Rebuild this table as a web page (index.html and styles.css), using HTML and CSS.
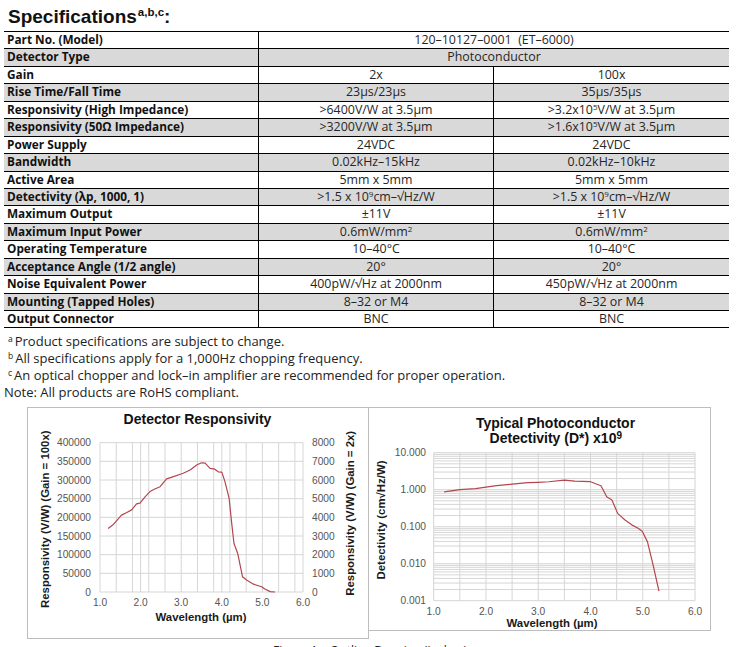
FILE: index.html
```html
<!DOCTYPE html>
<html lang="en">
<head>
<meta charset="utf-8">
<title>Specifications</title>
<link rel="stylesheet" href="styles.css">
</head>
<body>
<div class="page">
  <h1 class="title">Specifications<sup>a,b,c</sup>:</h1>

  <div class="spec">
    <div class="row"><div class="lab">Part No. (Model)</div><div class="val span">120–10127–0001&nbsp; (ET–6000)</div></div>
    <div class="row alt"><div class="lab">Detector Type</div><div class="val span">Photoconductor</div></div>
    <div class="row"><div class="lab">Gain</div><div class="val first">2x</div><div class="val">100x</div></div>
    <div class="row alt"><div class="lab">Rise Time/Fall Time</div><div class="val first">23µs/23µs</div><div class="val">35µs/35µs</div></div>
    <div class="row"><div class="lab">Responsivity (High Impedance)</div><div class="val first">&gt;6400V/W at 3.5µm</div><div class="val">&gt;3.2x10<sup>5</sup>V/W at 3.5µm</div></div>
    <div class="row alt"><div class="lab">Responsivity (50Ω Impedance)</div><div class="val first">&gt;3200V/W at 3.5µm</div><div class="val">&gt;1.6x10<sup>5</sup>V/W at 3.5µm</div></div>
    <div class="row"><div class="lab">Power Supply</div><div class="val first">24VDC</div><div class="val">24VDC</div></div>
    <div class="row alt"><div class="lab">Bandwidth</div><div class="val first">0.02kHz–15kHz</div><div class="val">0.02kHz–10kHz</div></div>
    <div class="row"><div class="lab">Active Area</div><div class="val first">5mm x 5mm</div><div class="val">5mm x 5mm</div></div>
    <div class="row alt"><div class="lab">Detectivity (λp, 1000, 1)</div><div class="val first">&gt;1.5 x 10<sup>9</sup>cm–√Hz/W</div><div class="val">&gt;1.5 x 10<sup>9</sup>cm–√Hz/W</div></div>
    <div class="row"><div class="lab">Maximum Output</div><div class="val first">±11V</div><div class="val">±11V</div></div>
    <div class="row alt"><div class="lab">Maximum Input Power</div><div class="val first">0.6mW/mm<sup>2</sup></div><div class="val">0.6mW/mm<sup>2</sup></div></div>
    <div class="row"><div class="lab">Operating Temperature</div><div class="val first">10–40°C</div><div class="val">10–40°C</div></div>
    <div class="row alt"><div class="lab">Acceptance Angle (1/2 angle)</div><div class="val first">20°</div><div class="val">20°</div></div>
    <div class="row"><div class="lab">Noise Equivalent Power</div><div class="val first">400pW/√Hz at 2000nm</div><div class="val">450pW/√Hz at 2000nm</div></div>
    <div class="row alt"><div class="lab">Mounting (Tapped Holes)</div><div class="val first">8–32 or M4</div><div class="val">8–32 or M4</div></div>
    <div class="row"><div class="lab">Output Connector</div><div class="val first">BNC</div><div class="val">BNC</div></div>
  </div>

  <div class="notes">
    <p class="note"><sup>a</sup>Product specifications are subject to change.</p>
    <p class="note"><sup>b</sup>All specifications apply for a 1,000Hz chopping frequency.</p>
    <p class="note"><sup>c</sup>An optical chopper and lock–in amplifier are recommended for proper operation.</p>
    <p class="note plain">Note: All products are RoHS compliant.</p>
  </div>

  <div class="charts">
    <div class="chart chart-l">
      <svg width="340" height="230" viewBox="0 0 340 230">
        <text class="ctitle" x="169.5" y="16">Detector Responsivity</text>
        <g transform="translate(72,184) scale(40.6,-0.37333)" class="grid">
          <line x1="0" x2="5" y1="0" y2="0"/><line x1="0" x2="5" y1="50" y2="50"/><line x1="0" x2="5" y1="100" y2="100"/>
          <line x1="0" x2="5" y1="150" y2="150"/><line x1="0" x2="5" y1="200" y2="200"/><line x1="0" x2="5" y1="250" y2="250"/>
          <line x1="0" x2="5" y1="300" y2="300"/><line x1="0" x2="5" y1="350" y2="350"/><line x1="0" x2="5" y1="400" y2="400"/>
          <line x1="0" x2="0" y1="0" y2="400"/><line x1="0.4" x2="0.4" y1="0" y2="400"/><line x1="0.8" x2="0.8" y1="0" y2="400"/>
          <line x1="1" x2="1" y1="0" y2="400"/><line x1="1.2" x2="1.2" y1="0" y2="400"/><line x1="1.6" x2="1.6" y1="0" y2="400"/>
          <line x1="2" x2="2" y1="0" y2="400"/><line x1="2.4" x2="2.4" y1="0" y2="400"/><line x1="2.8" x2="2.8" y1="0" y2="400"/>
          <line x1="3" x2="3" y1="0" y2="400"/><line x1="3.2" x2="3.2" y1="0" y2="400"/><line x1="3.6" x2="3.6" y1="0" y2="400"/>
          <line x1="4" x2="4" y1="0" y2="400"/><line x1="4.4" x2="4.4" y1="0" y2="400"/><line x1="4.8" x2="4.8" y1="0" y2="400"/>
          <line x1="5" x2="5" y1="0" y2="400"/>
          <polyline class="curve" points="0.2,170 0.33,181 0.53,206 0.66,213 0.78,220 0.9,236 0.985,238 1.11,255 1.23,269 1.35,276 1.48,282 1.64,303 1.81,309 2.05,318 2.22,327 2.38,340 2.5,346 2.59,345 2.71,331 2.83,329 2.91,322 3.0,321 3.08,295 3.18,251 3.24,188 3.3,130 3.39,104 3.51,41 3.61,32 3.78,21 3.98,14 4.06,8 4.19,1 4.31,0"/>
        </g>
        <g class="tick end">
          <text x="63" y="38.2">400000</text><text x="63" y="56.8">350000</text><text x="63" y="75.5">300000</text>
          <text x="63" y="94.2">250000</text><text x="63" y="112.8">200000</text><text x="63" y="131.5">150000</text>
          <text x="63" y="150.2">100000</text><text x="63" y="168.8">50000</text><text x="63" y="187.5">0</text>
        </g>
        <g class="tick">
          <text x="284" y="38.2">8000</text><text x="284" y="56.8">7000</text><text x="284" y="75.5">6000</text>
          <text x="284" y="94.2">5000</text><text x="284" y="112.8">4000</text><text x="284" y="131.5">3000</text>
          <text x="284" y="150.2">2000</text><text x="284" y="168.8">1000</text><text x="284" y="187.5">0</text>
        </g>
        <g class="tick mid">
          <text x="72" y="198">1.0</text><text x="112.6" y="198">2.0</text><text x="153.2" y="198">3.0</text>
          <text x="193.8" y="198">4.0</text><text x="234.4" y="198">5.0</text><text x="275" y="198">6.0</text>
        </g>
        <text class="atitle" x="173" y="212.5">Wavelength (µm)</text>
        <text class="atitle" transform="translate(20.5,111.2) rotate(-90)">Responsivity (V/W) (Gain = 100x)</text>
        <text class="atitle" transform="translate(325.5,105.3) rotate(-90)">Responsivity (V/W) (Gain = 2x)</text>
      </svg>
    </div>
    <div class="chart chart-r">
      <svg width="341" height="222" viewBox="0 0 341 222">
        <text class="ctitle" x="186.5" y="20.3">Typical Photoconductor</text>
        <text class="ctitle" x="186.8" y="35.3">Detectivity (D*) x10<tspan class="sup" dy="-4">9</tspan></text>
        <g transform="translate(64.7,81.7) scale(52.27,-37)" class="grid">
          <line x1="0" x2="5" y1="1" y2="1"/>
          <line x1="0" x2="5" y1="0.954" y2="0.954"/><line x1="0" x2="5" y1="0.903" y2="0.903"/><line x1="0" x2="5" y1="0.845" y2="0.845"/><line x1="0" x2="5" y1="0.778" y2="0.778"/><line x1="0" x2="5" y1="0.699" y2="0.699"/><line x1="0" x2="5" y1="0.602" y2="0.602"/><line x1="0" x2="5" y1="0.477" y2="0.477"/><line x1="0" x2="5" y1="0.301" y2="0.301"/>
          <line x1="0" x2="5" y1="0" y2="0"/>
          <line x1="0" x2="5" y1="-0.046" y2="-0.046"/><line x1="0" x2="5" y1="-0.097" y2="-0.097"/><line x1="0" x2="5" y1="-0.155" y2="-0.155"/><line x1="0" x2="5" y1="-0.222" y2="-0.222"/><line x1="0" x2="5" y1="-0.301" y2="-0.301"/><line x1="0" x2="5" y1="-0.398" y2="-0.398"/><line x1="0" x2="5" y1="-0.523" y2="-0.523"/><line x1="0" x2="5" y1="-0.699" y2="-0.699"/>
          <line x1="0" x2="5" y1="-1" y2="-1"/>
          <line x1="0" x2="5" y1="-1.046" y2="-1.046"/><line x1="0" x2="5" y1="-1.097" y2="-1.097"/><line x1="0" x2="5" y1="-1.155" y2="-1.155"/><line x1="0" x2="5" y1="-1.222" y2="-1.222"/><line x1="0" x2="5" y1="-1.301" y2="-1.301"/><line x1="0" x2="5" y1="-1.398" y2="-1.398"/><line x1="0" x2="5" y1="-1.523" y2="-1.523"/><line x1="0" x2="5" y1="-1.699" y2="-1.699"/>
          <line x1="0" x2="5" y1="-2" y2="-2"/>
          <line x1="0" x2="5" y1="-2.046" y2="-2.046"/><line x1="0" x2="5" y1="-2.097" y2="-2.097"/><line x1="0" x2="5" y1="-2.155" y2="-2.155"/><line x1="0" x2="5" y1="-2.222" y2="-2.222"/><line x1="0" x2="5" y1="-2.301" y2="-2.301"/><line x1="0" x2="5" y1="-2.398" y2="-2.398"/><line x1="0" x2="5" y1="-2.523" y2="-2.523"/><line x1="0" x2="5" y1="-2.699" y2="-2.699"/>
          <line x1="0" x2="5" y1="-3" y2="-3"/>
          <line x1="0" x2="0" y1="-3" y2="1"/><line x1="0.5" x2="0.5" y1="-3" y2="1"/><line x1="1" x2="1" y1="-3" y2="1"/>
          <line x1="1.5" x2="1.5" y1="-3" y2="1"/><line x1="2" x2="2" y1="-3" y2="1"/><line x1="2.5" x2="2.5" y1="-3" y2="1"/>
          <line x1="3" x2="3" y1="-3" y2="1"/><line x1="3.5" x2="3.5" y1="-3" y2="1"/><line x1="4" x2="4" y1="-3" y2="1"/>
          <line x1="4.5" x2="4.5" y1="-3" y2="1"/><line x1="5" x2="5" y1="-3" y2="1"/>
          <polyline class="curve" points="0.2,-0.06 0.5,0 0.8,0.03 1.0,0.07 1.2,0.11 1.5,0.15 1.8,0.19 2.0,0.2 2.2,0.215 2.5,0.26 2.7,0.23 3.0,0.216 3.2,0.108 3.31,-0.19 3.41,-0.28 3.52,-0.64 3.66,-0.82 3.79,-0.95 3.91,-1.04 3.99,-1.12 4.09,-1.41 4.2,-2.05 4.31,-2.74"/>
        </g>
        <g class="tick end">
          <text x="57" y="48.2">10.000</text><text x="57" y="85.2">1.000</text><text x="57" y="122.2">0.100</text>
          <text x="57" y="159.2">0.010</text><text x="57" y="196.2">0.001</text>
        </g>
        <g class="tick mid">
          <text x="64.7" y="207">1.0</text><text x="117" y="207">2.0</text><text x="169.2" y="207">3.0</text>
          <text x="221.5" y="207">4.0</text><text x="273.8" y="207">5.0</text><text x="326" y="207">6.0</text>
        </g>
        <text class="atitle" x="183" y="219">Wavelength (µm)</text>
        <text class="atitle" transform="translate(16,112) rotate(-90)">Detectivity (cm√Hz/W)</text>
      </svg>
    </div>
  </div>

  <p class="caption">Figure 1 – Outline Drawing (Inches)</p>
</div>
</body>
</html>
```

FILE: styles.css
```css
html, body {
  margin: 0;
  padding: 0;
  background: #ffffff;
}

body {
  font-family: "Open Sans", "Liberation Sans", Arial, sans-serif;
  color: #222222;
}

.page {
  padding-top: 6px;
}

.title {
  margin: 0 0 3px 8px;
  height: 22px;
  font-family: "Liberation Sans", Arial, sans-serif;
  font-size: 19px;
  line-height: 22px;
  font-weight: bold;
  color: #111111;
}

.title sup {
  font-size: 11.5px;
  line-height: 0;
  vertical-align: 7px;
  margin-left: 1px;
}

.spec {
  margin-left: 4px;
  width: 725px;
  border-top: 1px solid #000000;
}

.row {
  display: grid;
  grid-template-columns: 255px 235px 235px;
  height: 17.45px;
  box-sizing: border-box;
  border-bottom: 1px solid #000000;
  font-size: 12.4px;
  line-height: 15px;
  white-space: nowrap;
}

.row.alt {
  background: #d9d9d9;
}

.lab {
  padding-left: 3px;
  font-size: 11.8px;
  font-weight: bold;
  color: #111111;
  border-right: 1px solid #000000;
}

.val {
  text-align: center;
  color: #262626;
}

.val.first {
  border-right: 1px solid #000000;
}

.val.span {
  grid-column: 2 / 4;
}

.val sup {
  font-size: 8px;
  line-height: 0;
  vertical-align: 4px;
}

.notes {
  margin-top: 5px;
  font-size: 13px;
  line-height: 17px;
  color: #222222;
}

.note {
  margin: 0;
  padding-left: 8px;
  white-space: nowrap;
}

.note sup {
  font-size: 8.5px;
  line-height: 0;
  vertical-align: 4px;
  margin-right: 2px;
}

.note.plain {
  padding-left: 4px;
}

.charts {
  display: flex;
  align-items: flex-start;
  margin: 5.5px 0 0 27px;
}

.chart {
  border: 1px solid #bdbdbd;
  background: #ffffff;
}

.chart svg {
  display: block;
}

.chart-r {
  margin-left: -1px;
}

.chart text {
  font-family: "Liberation Sans", Arial, sans-serif;
}

.ctitle {
  font-size: 14px;
  font-weight: bold;
  fill: #111111;
  text-anchor: middle;
}

.ctitle .sup {
  font-size: 10px;
}

.atitle {
  font-size: 11.4px;
  font-weight: bold;
  fill: #1a1a1a;
  text-anchor: middle;
}

.tick text {
  font-size: 10.2px;
  fill: #555555;
}

.tick.end text {
  text-anchor: end;
}

.tick.mid text {
  text-anchor: middle;
}

.grid line {
  stroke: #d6d6d6;
  stroke-width: 1;
  vector-effect: non-scaling-stroke;
}

.curve {
  fill: none;
  stroke: #b3474d;
  stroke-width: 1.2;
  stroke-linejoin: round;
  vector-effect: non-scaling-stroke;
}

.caption {
  margin: 3px 0 0 273px;
  font-size: 12px;
  color: #222222;
}
```
